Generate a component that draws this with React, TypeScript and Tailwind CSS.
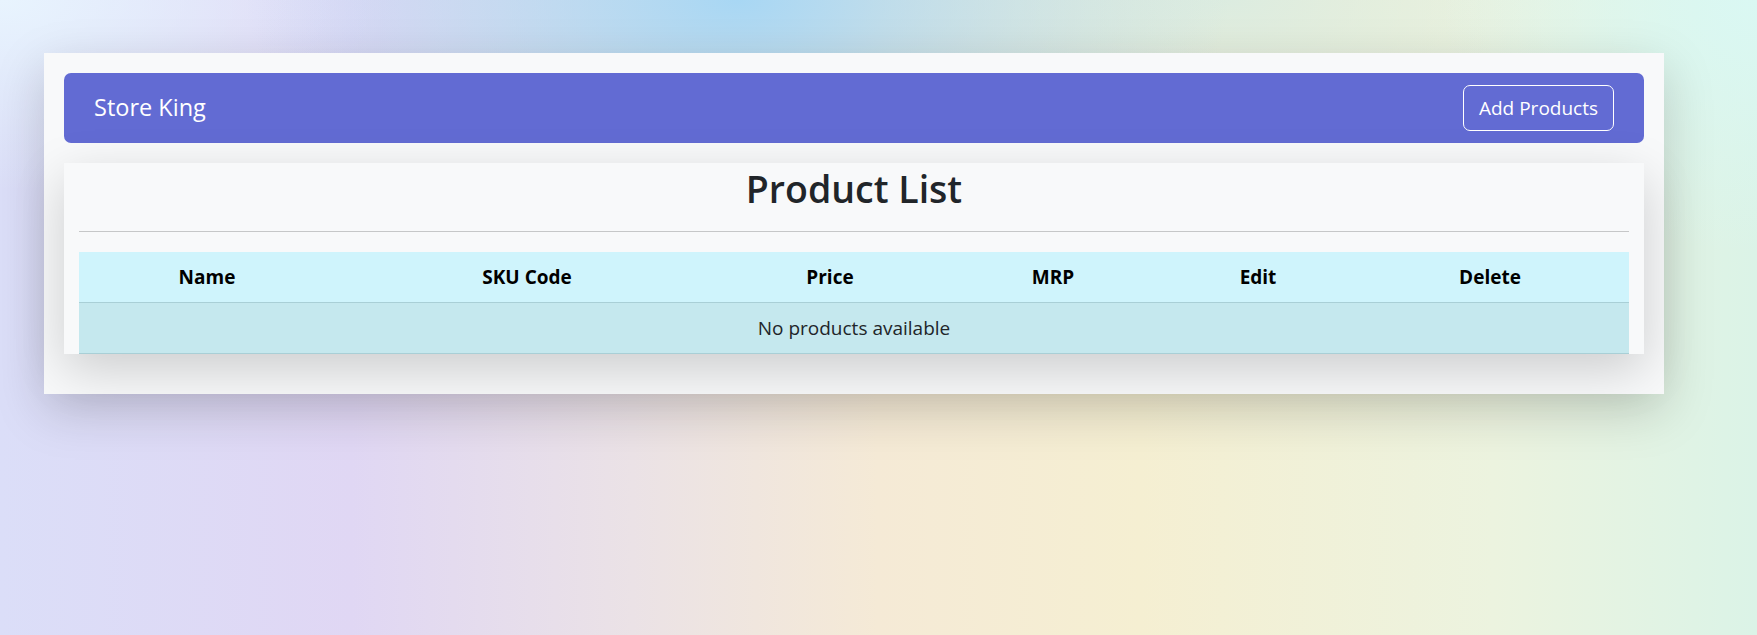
export default function App() {
  const cols = ["Name", "SKU Code", "Price", "MRP", "Edit", "Delete"]

  return (
    <div
      className="min-h-[635px] w-full pt-[53px] pl-[44px] font-['Open_Sans',sans-serif] text-[#212529] bg-[radial-gradient(ellipse_28%_38%_at_42%_0%,#a8d7f4_0%,rgba(168,215,244,0)_100%),radial-gradient(ellipse_22%_30%_at_0%_0%,#e8f4fe_0%,rgba(232,244,254,0)_100%),radial-gradient(ellipse_18%_40%_at_100%_0%,#daf8f3_0%,rgba(218,248,243,0)_100%),radial-gradient(ellipse_20%_28%_at_70%_0%,#dcece0_0%,rgba(220,236,224,0)_100%),linear-gradient(90deg,#dbdef8_0%,#e0d7f4_20%,#ebe2e6_36%,#f5ead6_50%,#f5efd2_65%,#ecf3df_85%,#dbf3e7_100%)]"
    >
      <div className="w-[1620px] bg-[#f8f9fa] px-5 pt-5 pb-10 shadow-[0_16px_48px_rgba(0,0,0,0.175)]">
        <nav className="flex h-[70px] items-center justify-between rounded-[7px] bg-[#626bd3] px-[30px]">
          <span className="text-[23.5px] text-white">Store King</span>
          <button className="h-[46px] w-[151px] rounded-[7px] border border-white text-[19px] text-white">
            Add Products
          </button>
        </nav>

        <div className="mt-5 bg-[#f8f9fa] px-[15px] shadow-[0_16px_48px_rgba(0,0,0,0.175)]">
          <h2 className="h-[48px] pt-[2px] text-center text-[37.5px] font-semibold leading-[48px] text-[#212529]">
            Product List
          </h2>
          <div className="mt-5 mb-5 h-px bg-[#c6c7c8]" />
          <table className="w-full table-fixed border-collapse text-[19px] text-black">
            <colgroup>
              <col className="w-[256px]" />
              <col className="w-[384px]" />
              <col className="w-[222px]" />
              <col className="w-[224px]" />
              <col className="w-[186px]" />
              <col className="w-[278px]" />
            </colgroup>
            <thead>
              <tr className="border-b border-[#a9cfd6] bg-[#cff4fc]">
                {cols.map((c) => (
                  <th key={c} className="py-[11.5px] text-center font-bold leading-[27px]">
                    {c}
                  </th>
                ))}
              </tr>
            </thead>
            <tbody>
              <tr className="border-b border-[#a9cfd6] bg-[#c5e8ee]">
                <td colSpan={6} className="py-[12px] text-center leading-[26px] text-[#212529]">
                  No products available
                </td>
              </tr>
            </tbody>
          </table>
        </div>
      </div>
    </div>
  )
}
